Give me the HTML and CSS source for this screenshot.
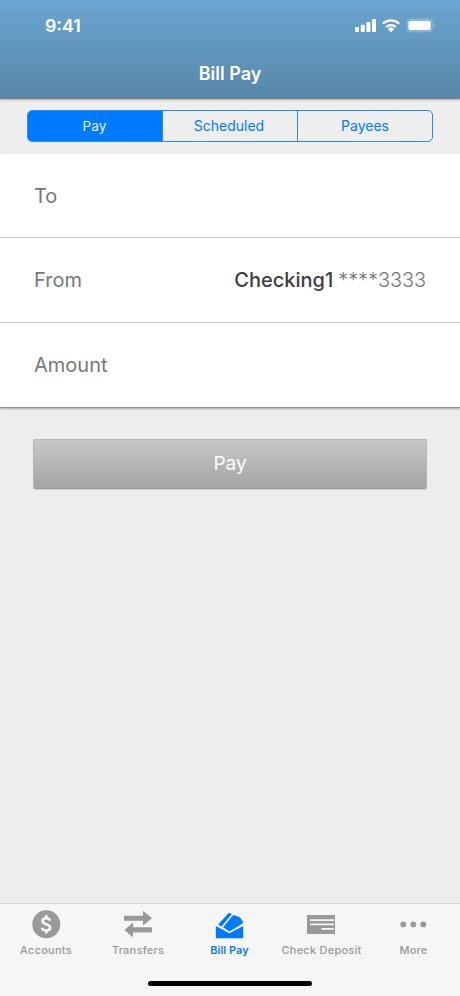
FILE: index.html
```html
<!DOCTYPE html>
<html lang="en">
<head>
<meta charset="utf-8">
<title>Bill Pay</title>
<link rel="stylesheet" href="styles.css">
</head>
<body>
<div class="app">
  <header class="header">
    <div class="status">
      <span class="time">9:41</span>
      <svg class="status-icons" width="82" height="16" viewBox="0 0 82 16">
        <g fill="#fff">
          <rect x="0" y="9" width="4" height="5" rx="1"/>
          <rect x="5.8" y="6.8" width="4" height="7.2" rx="1"/>
          <rect x="11.4" y="4" width="4" height="10" rx="1"/>
          <rect x="17" y="1" width="4" height="13" rx="1"/>
          <rect x="53.4" y="2.7" width="22.4" height="9.6" rx="2"/>
          <path d="M79 5.2q1.8 2.3 0 4.6z" opacity=".5"/>
          <path d="M32.7 11 36 8.9 39.3 11 36 14.2z"/>
        </g>
        <g fill="none" stroke="#fff">
          <path d="M27.8 5.8a11.7 11.7 0 0 1 16.4 0M31.1 9a7.1 7.1 0 0 1 9.8 0" stroke-width="2.2"/>
          <rect x="51.9" y="1.2" width="25.4" height="12.6" rx="3.5" opacity=".35"/>
        </g>
      </svg>
    </div>
    <h1 class="title">Bill Pay</h1>
  </header>
  <nav class="segments">
    <div class="segment-control">
      <button class="segment selected">Pay</button>
      <button class="segment">Scheduled</button>
      <button class="segment">Payees</button>
    </div>
  </nav>
  <main class="main">
    <section class="form">
      <div class="row"><span>To</span></div>
      <div class="row"><span>From</span><span class="account"><b>Checking1</b><span class="digits">****3333</span></span></div>
      <div class="row"><span>Amount</span></div>
    </section>
    <button class="pay">Pay</button>
  </main>
  <footer class="footer">
    <div class="tabs">
      <div class="tab">
        <svg width="30" height="30" viewBox="0 0 30 30"><circle cx="15.3" cy="15.3" r="14" fill="#999"/><path d="M19.2 11.7c-.5-1.7-1.9-2.5-3.9-2.5-2.3 0-3.8 1-3.8 2.8 0 4.1 7.6 2.4 7.6 6.6 0 1.9-1.5 3-4 3-2.3 0-3.8-1-4.2-2.8M15.3 6v3.5M15.3 21v3.5" fill="none" stroke="#f6f6f6" stroke-width="2.6"/></svg>
        <span>Accounts</span>
      </div>
      <div class="tab">
        <svg width="30" height="30" viewBox="0 0 30 30"><path d="M1 6.8h19V1.8l9 7.5-9 7.2v-4.7H1zM29 18.3H10v-4.6L1.4 21l8.6 7.2v-4.7h19z" fill="#999"/></svg>
        <span>Transfers</span>
      </div>
      <div class="tab active">
        <svg width="30" height="30" viewBox="0 0 30 30"><g fill="#007aff"><path d="M.8 17 14.4 24.3 28.2 17V29.3H.8z"/><path d="M4.2 14.3 13.3 4.6q.8-.8 1.8-.4l1.8.7L6.6 17.5 3.7 16Q3.3 15.3 4.2 14.3z"/><path d="M8 18.3 17.6 6.8q.7-.8 1.7-.5l4.9 1.8q.8.3 1.3 1l2.2 3.4q.7 1.2-.5 2.2L14.5 22.4z"/></g></svg>
        <span>Bill Pay</span>
      </div>
      <div class="tab">
        <svg width="30" height="30" viewBox="0 0 30 30"><path d="M0 6h28v19H0z" fill="#999"/><path d="M3 11.2h24M3 15.3h24M14.3 19.8h12.7" stroke="#f6f6f6" stroke-width="1.7"/></svg>
        <span>Check Deposit</span>
      </div>
      <div class="tab">
        <svg width="30" height="30" viewBox="0 0 30 30"><g fill="#999"><circle cx="4.3" cy="15.4" r="2.9"/><circle cx="14.3" cy="15.4" r="2.9"/><circle cx="24.3" cy="15.4" r="2.9"/></g></svg>
        <span>More</span>
      </div>
    </div>
    <div class="home"></div>
  </footer>
</div>
</body>
</html>
```

FILE: styles.css
```css
* { box-sizing: border-box; }
body { margin: 0; font-family: Inter, "Liberation Sans", sans-serif; }
button { font-family: inherit; margin: 0; padding: 0; }
.app { width: 460px; height: 996px; display: flex; flex-direction: column; background: #ededed; }
.header { height: 99px; flex: none; background: linear-gradient(#6ba5d1, #5787aa); border-bottom: 1px solid #807f82; box-shadow: 0 1px 2px #aaa; color: #fff; z-index: 1; }
.status { height: 50px; padding: 1px 24px 0 45px; display: flex; align-items: center; justify-content: space-between; }
.time { font-size: 17.8px; font-weight: 600; line-height: 22px; }
.status-icons { margin-right: -1px; }
.title { margin: 13px 0 0; text-align: center; font-size: 18px; line-height: 22px; font-weight: 600; letter-spacing: 0; }
.segments { height: 55px; flex: none; padding: 11px 27px 0; background: #eee; }
.segment-control { height: 32px; display: grid; grid-template-columns: 134px 135px 1fr; border: 1px solid #268bf4; border-radius: 5px; overflow: hidden; }
.segment { border: 0; border-left: 1px solid #268bf4; background: transparent; color: #007aff; font-size: 14px; line-height: 20px; }
.segment:nth-child(2) { padding-right: 2px; }
.segment:first-child { border-left: 0; }
.segment.selected { background: #007aff; color: #e8f3ff; font-size: 13.6px; padding-right: 1px; }
.main { flex: 1; }
.form { background: #fff; border-bottom: 1px solid #8b8b8b; box-shadow: 0 1px 2px #aaa; }
.row { height: 84px; padding: 1px 34px 0; display: flex; align-items: center; justify-content: space-between; border-bottom: 1px solid #cfcfcf; font-size: 20px; line-height: 26px; color: #777; }
.row:nth-child(2) { height: 84.5px; padding-top: 0; }
.row:last-child { height: 84.5px; border-bottom: 0; padding-top: 1px; }
.account { display: flex; gap: 5px; }
.account b { color: #3e3e3e; font-weight: 500; }
.digits { font-weight: 300; letter-spacing: -.1px; }
.pay { display: block; width: 394px; height: 50px; margin: 31px auto 0 33px; border: 1px solid #b8b8b8; border-bottom-color: #999; border-radius: 2px; background: linear-gradient(#c7c7c7, #a4a4a4); box-shadow: 0 1px 1px #ccc; color: #fff; font-size: 19px; line-height: 24px; }
.footer { height: 93px; flex: none; border-top: 1px solid #d5d5d5; background: #f6f6f6; }
.tabs { display: grid; grid-template-columns: repeat(5, 92px); padding-top: 5px; }
.tab { display: flex; flex-direction: column; align-items: center; color: #999; font-size: 11px; line-height: 14px; font-weight: 500; gap: 4px; letter-spacing: .24px; white-space: nowrap; }
.tab:nth-child(n+3) span { margin-left: -1px; }
.tab svg { display: block; }
.active { color: #0e7dec; font-weight: 600; letter-spacing: .05px; }
.home { width: 164px; height: 5px; margin: 24px auto 0; border-radius: 3px; background: #000; }
```
